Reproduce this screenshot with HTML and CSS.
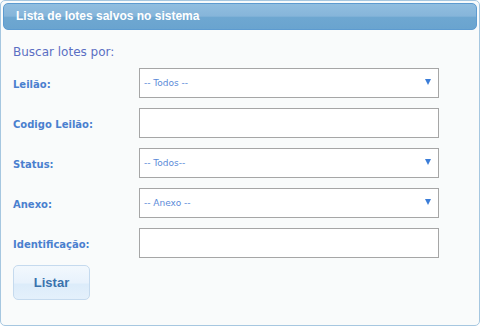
FILE: index.html
```html
<!DOCTYPE html>
<html lang="pt">
<head>
    <meta charset="UTF-8">
    <title>Lista de lotes</title>
    <link rel="stylesheet" href="styles.css">
</head>
<body>
    <div class="panel">
        <div class="panel-header">Lista de lotes salvos no sistema</div>
        <div class="panel-body">
            <div class="search-title">Buscar lotes por:</div>
            <div class="form-grid">
                <label class="field-label">Leilão:</label>
                <div class="select-box"><span>-- Todos --</span><i class="arrow"></i></div>

                <label class="field-label">Codigo Leilão:</label>
                <div class="text-box"></div>

                <label class="field-label">Status:</label>
                <div class="select-box"><span>-- Todos--</span><i class="arrow"></i></div>

                <label class="field-label">Anexo:</label>
                <div class="select-box"><span>-- Anexo --</span><i class="arrow"></i></div>

                <label class="field-label">Identificação:</label>
                <div class="text-box"></div>
            </div>
            <button class="btn-listar">Listar</button>
        </div>
    </div>
</body>
</html>
```

FILE: styles.css
```css
body {
    margin: 0;
    background: #ffffff;
}

.panel {
    box-sizing: border-box;
    width: 480px;
    height: 326px;
    border: 1px solid #a6c7e0;
    border-radius: 5px;
    padding: 2px;
    background: #f9fbfb;
}

.panel-header {
    box-sizing: border-box;
    height: 27px;
    border: 1px solid #5d9bd0;
    border-radius: 5px;
    padding-left: 12px;
    background: linear-gradient(#91bee0 0%, #86b5da 48%, #6ea7d1 54%, #6aa4cf 100%);
    color: #ffffff;
    font-family: "Liberation Sans", Arial, sans-serif;
    font-weight: bold;
    font-size: 12px;
    line-height: 25px;
}

.panel-body {
    padding: 15px 10px 0 10px;
}

.search-title {
    font-family: "DejaVu Sans", Verdana, sans-serif;
    font-size: 12px;
    line-height: 14px;
    color: #5b6fc3;
    margin-bottom: 9px;
}

.form-grid {
    display: grid;
    grid-template-columns: 126px 300px;
    grid-auto-rows: 30px;
    row-gap: 10px;
    align-items: center;
}

.field-label {
    font-family: "DejaVu Sans", Verdana, sans-serif;
    font-weight: bold;
    font-size: 10px;
    color: #4a80cf;
    padding-top: 2px;
}

.select-box,
.text-box {
    box-sizing: border-box;
    height: 30px;
    border: 1px solid #a6a6a6;
    background: #ffffff;
}

.select-box {
    display: flex;
    align-items: center;
    justify-content: space-between;
    padding: 0 7px 0 4px;
    font-family: "DejaVu Sans", Verdana, sans-serif;
    font-size: 9px;
    color: #5b8bd9;
}

.arrow {
    width: 0;
    height: 0;
    border-left: 3px solid transparent;
    border-right: 3px solid transparent;
    border-top: 6px solid #3b7dd8;
    margin-top: -2px;
}

.btn-listar {
    margin-top: 7px;
    width: 77px;
    height: 35px;
    border: 1px solid #c5daee;
    border-radius: 5px;
    background: linear-gradient(#f2f8fd 0%, #e8f2fc 50%, #dcecfa 56%, #e4f0fb 100%);
    color: #3a72ad;
    font-family: "Liberation Sans", Arial, sans-serif;
    font-weight: bold;
    font-size: 13px;
    padding: 0;
}
```
